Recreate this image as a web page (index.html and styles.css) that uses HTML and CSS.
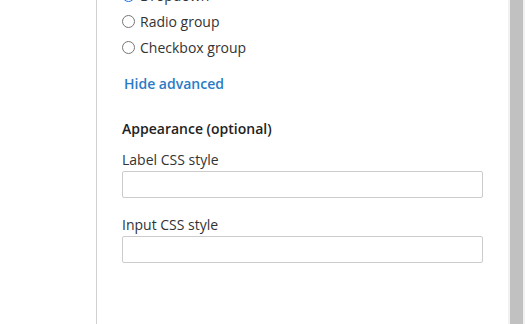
FILE: index.html
```html
<!DOCTYPE html>
<html lang="en">
<head>
    <meta charset="UTF-8">
    <title>Field settings</title>
    <link rel="stylesheet" href="styles.css">
</head>
<body>
    <div class="layout">
        <div class="side"></div>
        <div class="panel">
            <div class="options">
                <label class="option"><span class="radio checked"></span>Dropdown</label>
                <label class="option"><span class="radio"></span>Radio group</label>
                <label class="option"><span class="radio"></span>Checkbox group</label>
            </div>
            <a class="toggle" href="#">Hide advanced</a>
            <h3 class="section-title">Appearance (optional)</h3>
            <div class="field">
                <label class="field-label">Label CSS style</label>
                <input class="text-input" type="text">
            </div>
            <div class="field">
                <label class="field-label">Input CSS style</label>
                <input class="text-input" type="text">
            </div>
        </div>
        <div class="scrollbar"><div class="thumb"></div></div>
    </div>
</body>
</html>
```

FILE: styles.css
```css
body {
    margin: 0;
    font-family: 'Open Sans', sans-serif;
    font-size: 14px;
    color: #333;
    background: #fff;
    overflow: hidden;
}

.layout {
    display: flex;
    height: 324px;
}

.side {
    width: 96px;
    flex-shrink: 0;
}

.panel {
    flex: 1;
    border-left: 1px solid #d0d0d0;
    padding-left: 25px;
    padding-right: 25px;
}

/* Options */
.options {
    margin-top: -18px;
}

.option {
    display: flex;
    align-items: center;
    height: 26px;
}

.radio {
    width: 11px;
    height: 11px;
    border: 1px solid #767676;
    border-radius: 50%;
    margin-right: 5px;
    box-sizing: content-box;
}

.radio.checked {
    border-color: #1a73e8;
    background: radial-gradient(circle, #1a73e8 3px, #fff 3.5px);
}

.toggle {
    display: block;
    margin-top: 14px;
    padding-left: 2px;
    color: #2b7bc4;
    font-weight: 600;
    text-decoration: none;
}

.section-title {
    margin: 26px 0 0;
    font-size: 14px;
    font-weight: 600;
    color: #222;
}

.field {
    margin-top: 12px;
}

.field + .field {
    margin-top: 17px;
}

.field-label {
    display: block;
    line-height: 20px;
    margin-bottom: 1px;
}

.text-input {
    display: block;
    box-sizing: border-box;
    width: 361px;
    height: 27px;
    margin: 0;
    border: 1px solid #ccc;
    border-radius: 2px;
    font-family: inherit;
}

/* Scrollbar */
.scrollbar {
    width: 17px;
    flex-shrink: 0;
    background: #f1f1f1;
    padding: 0 2px;
    box-sizing: border-box;
}

.thumb {
    height: 100%;
    background: #c1c1c1;
}
```
